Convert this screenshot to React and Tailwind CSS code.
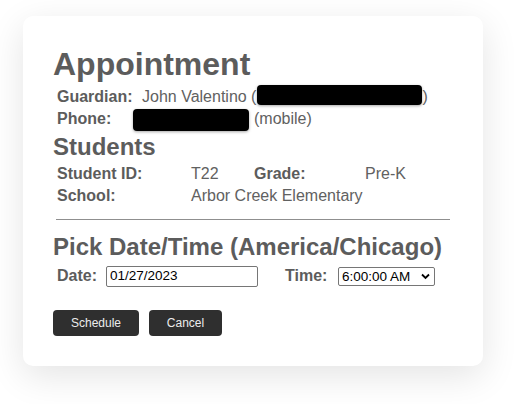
export default function App() {
  const font = { fontFamily: '"Liberation Sans", Arial, sans-serif' };
  return (
    <div className="w-[521px] h-[404px] bg-white pt-[16px] pl-[23px]" style={font}>
      <div className="w-[460px] h-[350px] rounded-[10px] bg-white shadow-[0_10px_36px_rgba(0,0,0,0.11)] pl-[30px] pt-[32px] text-[#5c5c5c]">
        <h1 className="text-[32px] leading-[32px] font-bold">Appointment</h1>
        <div className="mt-[6px] pl-[4px] text-[16px] leading-[22px]">
          <div className="flex h-[22px] items-start">
            <span className="w-[85px] font-bold">Guardian:</span>
            <span className="text-[#616161]">John Valentino (</span>
            <span className="ml-[1px] mt-[-1px] w-[165px] h-[20px] rounded-[4px] bg-black shadow-[0_1px_3px_rgba(0,0,0,0.35)]"></span>
            <span className="text-[#616161]">)</span>
          </div>
          <div className="flex h-[22px] items-start">
            <span className="w-[76px] font-bold">Phone:</span>
            <span className="mt-[1px] w-[116px] h-[22px] rounded-[4px] bg-black shadow-[0_1px_3px_rgba(0,0,0,0.35)]"></span>
            <span className="ml-[5px] text-[#616161]">(mobile)</span>
          </div>
        </div>
        <h2 className="mt-[3px] text-[24px] leading-[28px] font-bold">Students</h2>
        <div className="mt-[2px] pl-[4px] text-[16px] leading-[22px]">
          <div className="flex h-[22px]">
            <span className="w-[134px] font-bold">Student ID:</span>
            <span className="w-[63px] text-[#616161]">T22</span>
            <span className="w-[111px] font-bold">Grade:</span>
            <span className="text-[#616161]">Pre-K</span>
          </div>
          <div className="flex h-[22px]">
            <span className="w-[134px] font-bold">School:</span>
            <span className="text-[#616161]">Arbor Creek Elementary</span>
          </div>
        </div>
        <div className="mt-[12px] ml-[3px] w-[394px] h-px bg-[#8f8f8f]"></div>
        <h2 className="mt-[13px] text-[24px] leading-[28px] font-bold">Pick Date/Time (America/Chicago)</h2>
        <div className="mt-[3px] pl-[4px] flex h-[24px] items-center text-[16px] leading-[22px]">
          <span className="w-[49px] font-bold">Date:</span>
          <input
            readOnly
            value="01/27/2023"
            className="w-[152px] h-[21px] rounded-[2px] border border-[#767676] bg-white px-[3px] text-[13.5px] text-black outline-none"
            style={font}
          />
          <span className="ml-[27px] w-[53px] font-bold">Time:</span>
          <div className="relative w-[97px] h-[19px] rounded-[2px] border border-[#767676] bg-white text-[13.5px] leading-[17px] text-black pl-[3px]">
            6:00:00 AM
            <svg className="absolute right-[4px] top-[5px]" width="9" height="7" viewBox="0 0 9 7">
              <path d="M1 1.5 L4.5 5 L8 1.5" fill="none" stroke="#000" strokeWidth="1.8" />
            </svg>
          </div>
        </div>
        <div className="mt-[22px] flex gap-[10px]">
          <button className="w-[86px] h-[26px] rounded-[4px] bg-[#2f2f2f] text-[12px] text-[#ececec]" style={font}>Schedule</button>
          <button className="w-[73px] h-[26px] rounded-[4px] bg-[#2f2f2f] text-[12px] text-[#ececec]" style={font}>Cancel</button>
        </div>
      </div>
    </div>
  );
}
